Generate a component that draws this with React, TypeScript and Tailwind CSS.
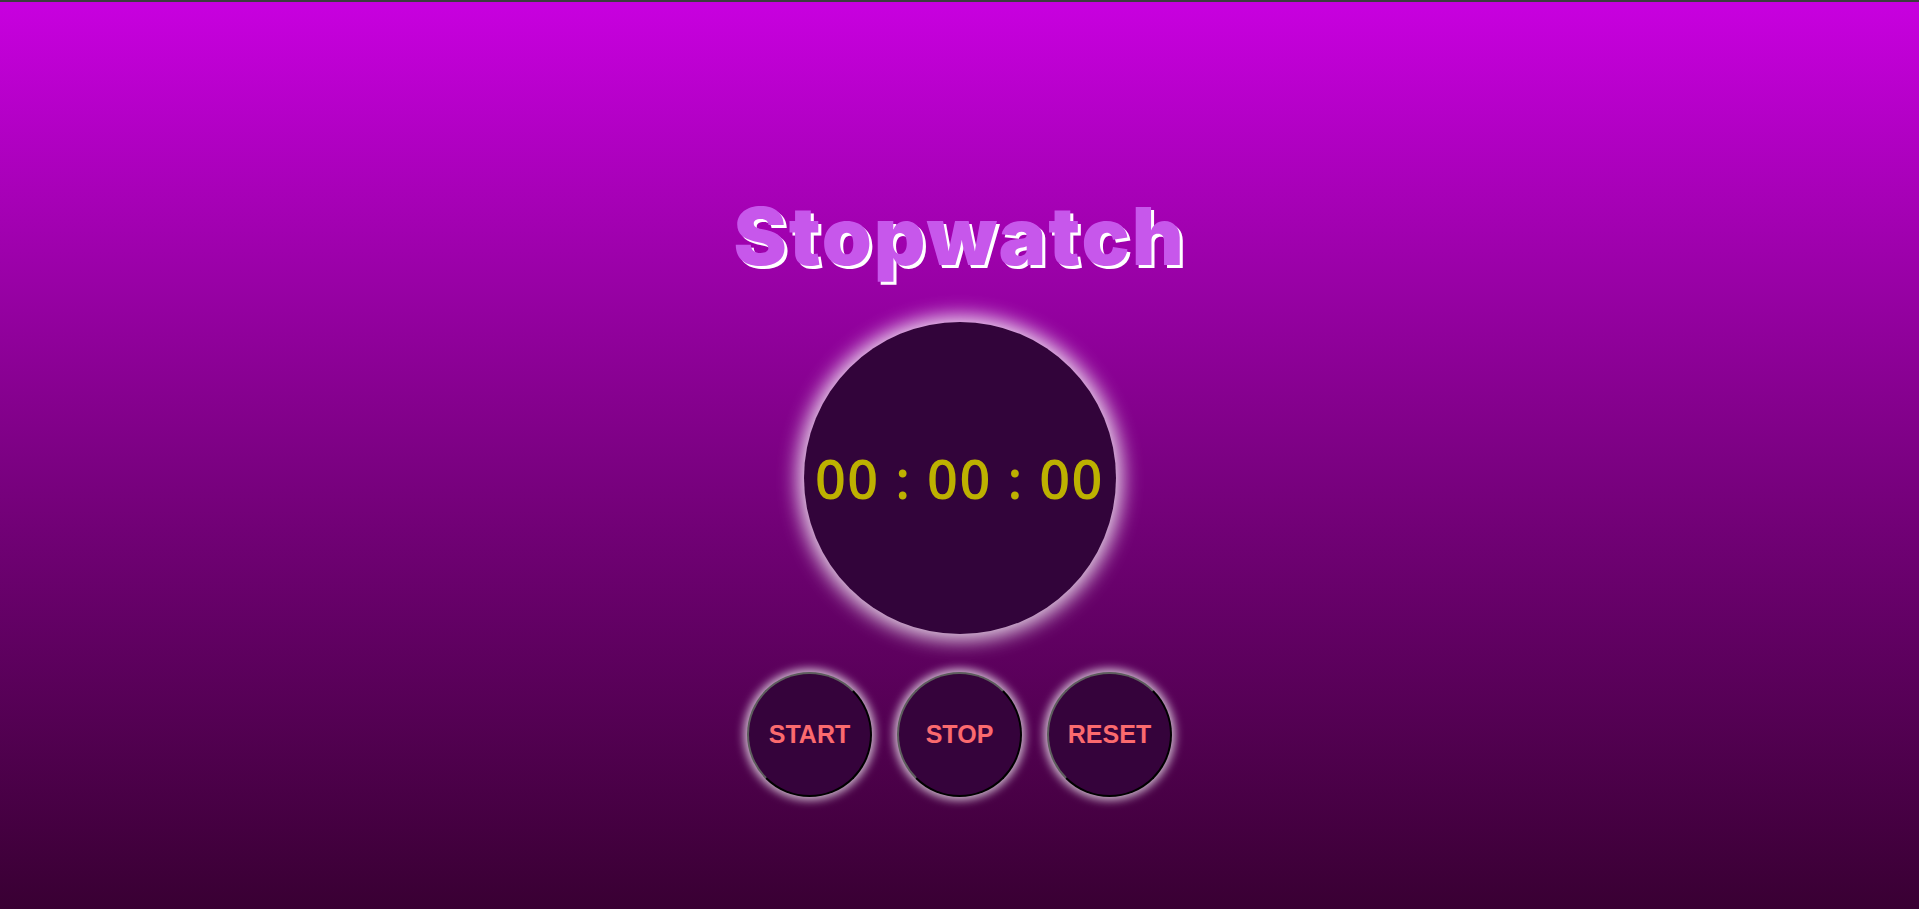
import React, { useEffect, useRef, useState } from 'react';

const pad = (n: number) => String(n).padStart(2, '0');

export default function App() {
  const [ticks, setTicks] = useState(0);
  const [running, setRunning] = useState(false);
  const timer = useRef<number | null>(null);

  useEffect(() => {
    if (running) {
      timer.current = window.setInterval(() => setTicks((t) => t + 1), 10);
    }
    return () => {
      if (timer.current) window.clearInterval(timer.current);
    };
  }, [running]);

  const minutos = Math.floor(ticks / 6000);
  const segundos = Math.floor((ticks % 6000) / 100);
  const centesimos = ticks % 100;

  const botao =
    'w-[125px] h-[125px] rounded-full bg-[#35033b] border-2 border-t-[#5d5d5d] border-l-[#5d5d5d] border-r-black border-b-black shadow-[0_0_10px_3px_rgba(255,255,255,0.75)] text-[25px] font-bold text-[#fb6a6e] font-["Liberation_Sans",Arial,sans-serif] cursor-pointer';

  return (
    <div className="min-h-screen border-t-2 border-[#3c3c3c] bg-gradient-to-b from-[#c800df] to-[#390033] flex flex-col items-center">
      <h1 className="mt-[194px] text-[80px] leading-none font-black text-[#c757eb] font-['Inter','Noto_Sans',sans-serif] tracking-[2px] [text-shadow:3px_3px_0_#ffffff]">
        Stopwatch
      </h1>

      <div className="mt-[46px] w-[312px] h-[312px] rounded-full bg-[#32043a] shadow-[0_0_20px_6px_rgba(255,255,255,0.85)] flex items-center justify-center">
        <span className="text-[54px] leading-none font-semibold text-[#bdb100] font-['Open_Sans','Noto_Sans',sans-serif] tracking-[1.5px]">
          {pad(minutos)} : {pad(segundos)} : {pad(centesimos)}
        </span>
      </div>

      <div className="mt-[38px] flex gap-[25px]">
        <button className={botao} onClick={() => setRunning(true)}>
          START
        </button>
        <button className={botao} onClick={() => setRunning(false)}>
          STOP
        </button>
        <button
          className={botao}
          onClick={() => {
            setRunning(false);
            setTicks(0);
          }}
        >
          RESET
        </button>
      </div>
    </div>
  );
}
